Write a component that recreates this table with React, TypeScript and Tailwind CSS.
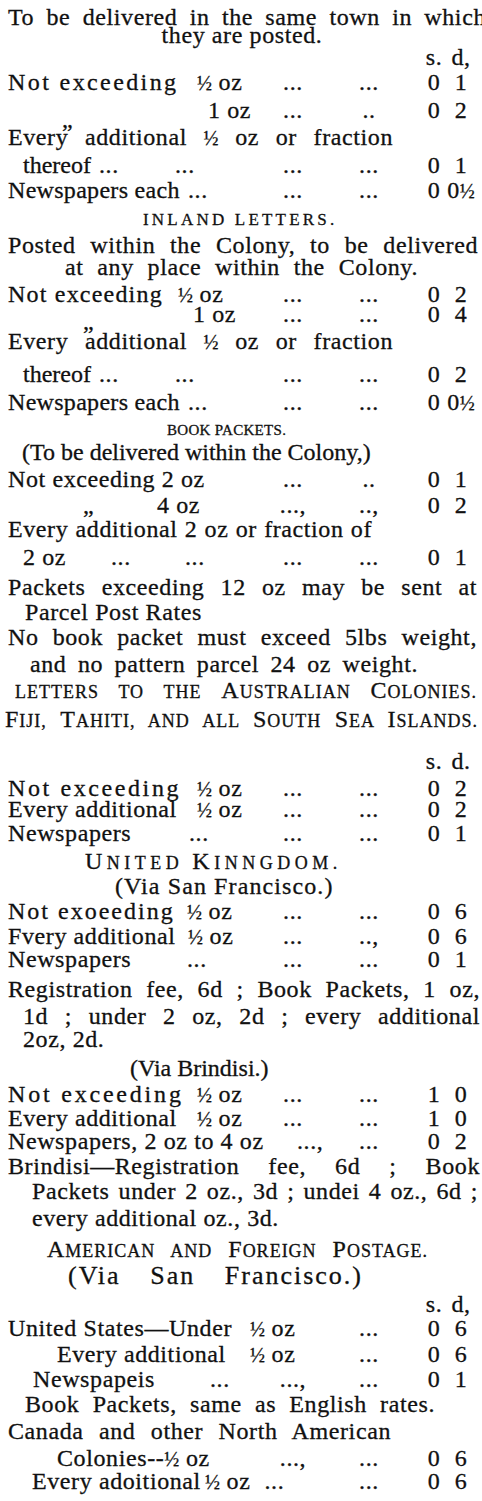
import clsx from "clsx";
import type { ReactNode } from "react";

// justified run of text: stretches to the measured width of the printed line
function J({ w, className, children }: { w: string; className?: string; children: ReactNode }) {
  return (
    <span className={clsx("inline-block whitespace-nowrap text-justify [text-align-last:justify]", w, className)}>
      {children}
    </span>
  );
}

// fixed-width cell inside a line, for tab-like alignment
function Cell({ w, className, children }: { w: string; className?: string; children?: ReactNode }) {
  return <span className={clsx("inline-block whitespace-nowrap", w, className)}>{children}</span>;
}

function Half() {
  return <span className="text-[20px] tracking-[0px]">½</span>;
}

function SmallCaps({ text, big, small }: { text: string; big: string; small: string }) {
  const parts: { s: string; up: boolean }[] = [];
  for (const ch of text) {
    const up = ch !== ch.toLowerCase();
    const last = parts[parts.length - 1];
    if (last && last.up === up) last.s += ch;
    else parts.push({ s: ch, up });
  }
  return (
    <>
      {parts.map((p, i) => (
        <span key={i} className={p.up ? big : small}>
          {p.up ? p.s : p.s.toUpperCase()}
        </span>
      ))}
    </>
  );
}

function Line({ h, className, children }: { h: string; className?: string; children: ReactNode }) {
  return <div className={clsx("whitespace-nowrap", h, className)}>{children}</div>;
}

function Rate({
  h,
  a,
  b,
  s,
  d,
  wide,
  children,
}: {
  h: string;
  a?: string;
  b?: string;
  s?: ReactNode;
  d?: ReactNode;
  wide?: boolean;
  children?: ReactNode;
}) {
  return (
    <div className={clsx("grid grid-cols-[1fr_76px_76px_15px_24px_30px] whitespace-nowrap", h)}>
      <div className={clsx("whitespace-nowrap", wide && "col-span-2")}>{children}</div>
      {!wide && <span className="text-center">{a}</span>}
      <span className="text-center">{b}</span>
      <span />
      <span className="text-center">{s}</span>
      <span className="text-center">{d}</span>
    </div>
  );
}

const big = "text-[24px]";
const small = "text-[18px]";

const halfPenny = (
  <>
    0<Half />
  </>
);

export default function App() {
  return (
    <div className="min-h-[1501px] w-[482px] overflow-hidden bg-white pl-[8px] pr-[6px] pt-[4px] font-['Liberation_Serif','Times_New_Roman',serif] text-[24px] leading-[26px] tracking-[0.6px] text-[#111] [-webkit-text-stroke:0.3px_#111]">
      {/* town letters */}
      <Line h="h-[18px]">
        <J w="w-[478px]">To be delivered in the same town in which</J>
      </Line>
      <Line h="h-[22px]" className="text-center">
        they are posted.
      </Line>
      <Rate h="h-[25px]" s="s." d="d," />
      <Rate h="h-[28px]" a="..." b="..." s="0" d="1">
        <Cell w="w-[189px]" className="tracking-[2.4px]">
          Not exceeding
        </Cell>
        <Half /> oz
      </Rate>
      <Rate h="h-[27px]" a="..." b=".." s="0" d="2">
        <Cell w="w-[200px]">
          <span className="relative top-[22px] ml-[54px]">”</span>
        </Cell>
        1 oz
      </Rate>
      <Line h="h-[28px]">
        <J w="w-[385px]">
          Every additional <Half /> oz or fraction
        </J>
      </Line>
      <Rate h="h-[25px]" a="..." b="..." s="0" d="1">
        <Cell w="w-[76px]" className="ml-[15px] tracking-[0px]">
          thereof
        </Cell>
        <Cell w="w-[76px]">...</Cell>
        ...
      </Rate>
      <Rate h="h-[27px]" a="..." b="..." s="0" d={halfPenny}>
        <Cell w="w-[180px]" className="tracking-[0.3px]">
          Newspapers each
        </Cell>
        ...
      </Rate>

      {/* inland */}
      <Line h="h-[28px]" className="pl-[135px]">
        <span className="text-[17px] tracking-[3.2px]">INLAND LETTERS.</span>
      </Line>
      <Line h="h-[22px]">
        <J w="w-[470px]">Posted within the Colony, to be delivered</J>
      </Line>
      <Line h="h-[27px]" className="pl-[57px]">
        <J w="w-[353px]">at any place within the Colony.</J>
      </Line>
      <Rate h="h-[20px]" a="..." b="..." s="0" d="2">
        <Cell w="w-[170px]" className="tracking-[1.2px]">
          Not exceeding
        </Cell>
        <Half /> oz
      </Rate>
      <Rate h="h-[27px]" a="..." b="..." s="0" d="4">
        <Cell w="w-[185px]">
          <span className="relative top-[20px] ml-[75px]">”</span>
        </Cell>
        1 oz
      </Rate>
      <Line h="h-[33px]">
        <J w="w-[385px]">
          Every additional <Half /> oz or fraction
        </J>
      </Line>
      <Rate h="h-[28px]" a="..." b="..." s="0" d="2">
        <Cell w="w-[76px]" className="ml-[15px] tracking-[0px]">
          thereof
        </Cell>
        <Cell w="w-[76px]">...</Cell>
        ...
      </Rate>
      <Rate h="h-[25px]" a="..." b="..." s="0" d={halfPenny}>
        <Cell w="w-[180px]" className="tracking-[0.3px]">
          Newspapers each
        </Cell>
        ...
      </Rate>

      {/* book packets */}
      <Line h="h-[25px]" className="pl-[159px]">
        <span className="text-[15px] tracking-[0.3px]">BOOK PACKETS.</span>
      </Line>
      <Line h="h-[27px]" className="pl-[14px] tracking-[0px]">
        (To be delivered within the Colony,)
      </Line>
      <Rate h="h-[26px]" a="..." b=".." s="0" d="1">
        Not exceeding 2 oz
      </Rate>
      <Rate h="h-[24px]" a="...," b="..," s="0" d="2">
        <Cell w="w-[149px]">
          <span className="ml-[75px]">„</span>
        </Cell>
        4 oz
      </Rate>
      <Line h="h-[28px]">
        <J w="w-[364px]">Every additional 2 oz or fraction of</J>
      </Line>
      <Rate h="h-[30px]" a="..." b="..." s="0" d="1">
        <Cell w="w-[88px]" className="ml-[15px]">
          2 oz
        </Cell>
        <Cell w="w-[74px]">...</Cell>
        ...
      </Rate>
      <Line h="h-[25px]">
        <J w="w-[469px]">Packets exceeding 12 oz may be sent at</J>
      </Line>
      <Line h="h-[25px]" className="pl-[17px]">
        Parcel Post Rates
      </Line>
      <Line h="h-[27px]">
        <J w="w-[469px]">No book packet must exceed 5lbs weight,</J>
      </Line>
      <Line h="h-[26px]" className="pl-[22px]">
        <J w="w-[388px]">and no pattern parcel 24 oz weight.</J>
      </Line>

      {/* australian colonies */}
      <Line h="h-[29px]" className="pl-[7px]">
        <J w="w-[462px]" className="tracking-[1px]">
          <SmallCaps text="letters to the Australian Colonies." big={big} small={small} />
        </J>
      </Line>
      <Line h="h-[42px]" className="-ml-[3px]">
        <J w="w-[473px]" className="tracking-[1px]">
          <SmallCaps text="Fiji, Tahiti, and all South Sea Islands." big={big} small={small} />
        </J>
      </Line>
      <Rate h="h-[27px]" s="s." d="d." />
      <Rate h="h-[21px]" a="..." b="..." s="0" d="2">
        <Cell w="w-[189px]" className="tracking-[2.6px]">
          Not exceeding
        </Cell>
        <Half /> oz
      </Rate>
      <Rate h="h-[24px]" a="..." b="..." s="0" d="2">
        <Cell w="w-[189px]">Every additional</Cell>
        <Half /> oz
      </Rate>
      <Rate h="h-[28px]" a="..." b="..." s="0" d="1">
        <Cell w="w-[181px]">Newspapers</Cell>
        ...
      </Rate>

      {/* united kingdom */}
      <Line h="h-[25px]" className="pl-[77px] tracking-[4.5px]">
        <SmallCaps text="United Kinngdom." big={big} small={small} />
      </Line>
      <Line h="h-[25px]" className="pl-[107px] tracking-[1.1px]">
        (Via San Francisco.)
      </Line>
      <Rate h="h-[25px]" a="..." b="..." s="0" d="6">
        <Cell w="w-[179px]" className="tracking-[2px]">
          Not exoeeding
        </Cell>
        <Half /> oz
      </Rate>
      <Rate h="h-[23px]" a="..." b="..," s="0" d="6">
        <Cell w="w-[180px]">Fvery additional</Cell>
        <Half /> oz
      </Rate>
      <Rate h="h-[30px]" a="..." b="..." s="0" d="1">
        <Cell w="w-[179px]">Newspapers</Cell>
        ...
      </Rate>
      <Line h="h-[27px]">
        <J w="w-[472px]">Registration fee, 6d ; Book Packets, 1 oz,</J>
      </Line>
      <Line h="h-[23px]" className="pl-[15px]">
        <J w="w-[457px]">1d ; under 2 oz, 2d ; every additional</J>
      </Line>
      <Line h="h-[29px]" className="pl-[15px]">
        2oz, 2d.
      </Line>
      <Line h="h-[26px]" className="pl-[122px] tracking-[0px]">
        (Via Brindisi.)
      </Line>
      <Rate h="h-[24px]" a="..." b="..." s="1" d="0">
        <Cell w="w-[189px]" className="tracking-[2.8px]">
          Not exceeding
        </Cell>
        <Half /> oz
      </Rate>
      <Rate h="h-[23px]" a="..." b="..." s="1" d="0">
        <Cell w="w-[189px]">Every additional</Cell>
        <Half /> oz
      </Rate>
      <Rate h="h-[25px]" wide b="..." s="0" d="2">
        <Cell w="w-[289px]">Newspapers, 2 oz to 4 oz</Cell>
        ...,
      </Rate>
      <Line h="h-[25px]">
        <J w="w-[472px]">Brindisi—Registration fee, 6d ; Book</J>
      </Line>
      <Line h="h-[27px]" className="pl-[24px]">
        <J w="w-[446px]">Packets under 2 oz., 3d ; undei 4 oz., 6d ;</J>
      </Line>
      <Line h="h-[31px]" className="pl-[24px]">
        every additional oz., 3d.
      </Line>

      {/* american and foreign */}
      <Line h="h-[27px]" className="pl-[39px]">
        <J w="w-[381px]" className="tracking-[1px]">
          <SmallCaps text="American and Foreign Postage." big={big} small={small} />
        </J>
      </Line>
      <Line h="h-[28px]" className="pl-[60px]">
        <J w="w-[295px]" className="text-[26px] tracking-[2px]">
          (Via San Francisco.)
        </J>
      </Line>
      <Rate h="h-[24px]" s="s." d="d," />
      <Rate h="h-[26px]" wide b="..." s="0" d="6">
        <Cell w="w-[242px]">United States—Under</Cell>
        <Half /> oz
      </Rate>
      <Rate h="h-[25px]" wide b="..." s="0" d="6">
        <Cell w="w-[193px]" className="ml-[49px]">
          Every additional
        </Cell>
        <Half /> oz
      </Rate>
      <Rate h="h-[25px]" a="...," b="..." s="0" d="1">
        <Cell w="w-[177px]" className="ml-[25px]">
          Newspapeis
        </Cell>
        ...
      </Rate>
      <Line h="h-[27px]" className="pl-[17px]">
        <J w="w-[410px]">Book Packets, same as English rates.</J>
      </Line>
      <Line h="h-[27px]">
        <J w="w-[383px]">Canada and other North American</J>
      </Line>
      <Rate h="h-[23px]" a="...," b="..." s="0" d="6">
        <span className="ml-[49px]">
          Colonies--<Half /> oz
        </span>
      </Rate>
      <Rate h="h-[26px]" wide b="..." s="0" d="6">
        <Cell w="w-[173px]" className="ml-[24px]">
          Every adoitional
        </Cell>
        <Half /> oz
        <span className="ml-[14px]">...</span>
      </Rate>
    </div>
  );
}
